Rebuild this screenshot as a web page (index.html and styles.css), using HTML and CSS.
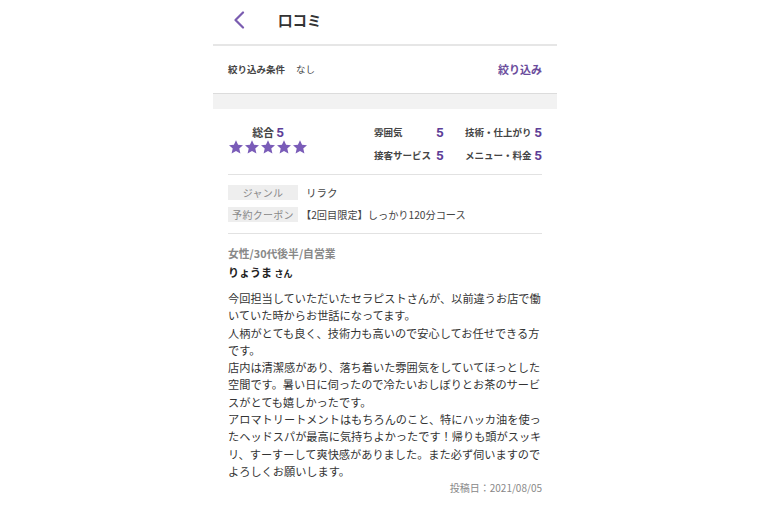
FILE: index.html
```html
<!DOCTYPE html>
<html lang="ja">
<head>
<meta charset="utf-8">
<link rel="stylesheet" href="styles.css">
</head>
<body>
<div class="page">
  <header class="header">
    <svg class="back" width="12" height="18" viewBox="0 0 12 18"><polyline points="10,1.5 2.5,9 10,16.5" fill="none" stroke="#7a5cb0" stroke-width="2.2" stroke-linecap="round" stroke-linejoin="round"/></svg>
    <h1 class="title">口コミ</h1>
  </header>
  <div class="filter">
    <div class="filter-left"><span class="filter-label">絞り込み条件</span><span class="filter-value">なし</span></div>
    <div class="filter-btn">絞り込み</div>
  </div>
  <div class="band"></div>
  <section class="ratings">
    <div class="total">
      <div class="total-line"><span class="total-label">総合</span><span class="num">5</span></div>
      <div class="stars">
        <svg viewBox="0 0 24 24" class="star"><path d="M12 1.8l3.1 6.9 7.4.7-5.6 5 1.7 7.4L12 17.9l-6.6 3.9 1.7-7.4-5.6-5 7.4-.7z"/></svg>
        <svg viewBox="0 0 24 24" class="star"><path d="M12 1.8l3.1 6.9 7.4.7-5.6 5 1.7 7.4L12 17.9l-6.6 3.9 1.7-7.4-5.6-5 7.4-.7z"/></svg>
        <svg viewBox="0 0 24 24" class="star"><path d="M12 1.8l3.1 6.9 7.4.7-5.6 5 1.7 7.4L12 17.9l-6.6 3.9 1.7-7.4-5.6-5 7.4-.7z"/></svg>
        <svg viewBox="0 0 24 24" class="star"><path d="M12 1.8l3.1 6.9 7.4.7-5.6 5 1.7 7.4L12 17.9l-6.6 3.9 1.7-7.4-5.6-5 7.4-.7z"/></svg>
        <svg viewBox="0 0 24 24" class="star"><path d="M12 1.8l3.1 6.9 7.4.7-5.6 5 1.7 7.4L12 17.9l-6.6 3.9 1.7-7.4-5.6-5 7.4-.7z"/></svg>
      </div>
    </div>
    <div class="detail">
      <span class="d-label">雰囲気</span><span class="num">5</span>
      <span class="d-label">技術・仕上がり</span><span class="num end">5</span>
      <span class="d-label">接客サービス</span><span class="num">5</span>
      <span class="d-label">メニュー・料金</span><span class="num end">5</span>
    </div>
  </section>
  <section class="info">
    <div class="info-row"><span class="tag">ジャンル</span><span class="info-val">リラク</span></div>
    <div class="info-row"><span class="tag">予約クーポン</span><span class="info-val coupon">【2回目限定】しっかり120分コース</span></div>
  </section>
  <section class="review">
    <div class="attr">女性/30代後半/自営業</div>
    <div class="name">りょうま <span class="san">さん</span></div>
    <p class="body">今回担当していただいたセラピストさんが、以前違うお店で働いていた時からお世話になってます。<br>人柄がとても良く、技術力も高いので安心してお任せできる方です。<br>店内は清潔感があり、落ち着いた雰囲気をしていてほっとした空間です。暑い日に伺ったので冷たいおしぼりとお茶のサービスがとても嬉しかったです。<br>アロマトリートメントはもちろんのこと、特にハッカ油を使ったヘッドスパが最高に気持ちよかったです！帰りも頭がスッキリ、すーすーして爽快感がありました。また必ず伺いますのでよろしくお願いします。</p>
    <div class="date">投稿日：2021/08/05</div>
  </section>
</div>
</body>
</html>
```
FILE: styles.css
```css
html, body {
  margin: 0;
  padding: 0;
  background: #fff;
}
body {
  font-family: "Noto Sans CJK JP", "Noto Sans", sans-serif;
  color: #333;
}
.page {
  width: 344px;
  margin: 0 auto;
}
.header {
  box-sizing: border-box;
  height: 46px;
  padding: 0 0 4px 20px;
  display: flex;
  align-items: center;
  border-bottom: 2px solid #e6e6e6;
}
.back {
  display: block;
}
.title {
  margin: 0 0 0 33px;
  font-size: 14.5px;
  font-weight: 700;
  color: #333;
  line-height: 20px;
}
.filter {
  box-sizing: border-box;
  height: 47px;
  padding: 0 15px 2px;
  display: flex;
  align-items: center;
  justify-content: space-between;
}
.filter-left {
  font-size: 9.5px;
  line-height: 14px;
  display: flex;
  align-items: center;
}
.filter-label {
  font-weight: 700;
  color: #444;
}
.filter-value {
  color: #444;
  margin-left: 11px;
}
.filter-btn {
  font-size: 11px;
  line-height: 14px;
  font-weight: 700;
  color: #6a4c9c;
}
.band {
  height: 15px;
  background: #f2f2f2;
  border-top: 1px solid #dcdcdc;
}
.ratings {
  margin: 0 15px;
  padding: 13px 0 9px;
  display: flex;
  border-bottom: 1px solid #e2e2e2;
}
.total {
  width: 80px;
  display: flex;
  flex-direction: column;
  align-items: center;
}
.total-line {
  height: 20px;
  display: flex;
  align-items: center;
}
.total-label {
  font-size: 11px;
  font-weight: 700;
  color: #444;
  margin-right: 2px;
}
.num {
  font-family: "Roboto", "Noto Sans", sans-serif;
  font-size: 13.5px;
  font-weight: 700;
  color: #5e3f98;
  line-height: 20px;
}
.stars {
  display: flex;
  margin-top: -3px;
}
.star {
  width: 16px;
  height: 16px;
  fill: #7a5cb8;
}
.detail {
  margin-left: 66px;
  display: grid;
  grid-template-columns: 62px 29px 70px 7px;
  grid-auto-rows: 20px;
  row-gap: 3px;
  align-items: center;
}
.d-label {
  font-size: 9.5px;
  font-weight: 700;
  color: #444;
  white-space: nowrap;
}
.end {
  justify-self: end;
}
.info {
  margin: 0 15px;
  padding: 10px 0 11px;
  display: flex;
  flex-direction: column;
  gap: 7px;
  border-bottom: 1px solid #e2e2e2;
}
.info-row {
  display: flex;
  align-items: center;
  height: 15px;
}
.tag {
  width: 70px;
  height: 15px;
  line-height: 15px;
  background: #eeeeee;
  color: #888;
  font-size: 10px;
  text-align: center;
  letter-spacing: 0.3px;
}
.info-val {
  margin-left: 8px;
  font-size: 10.5px;
  color: #444;
}
.coupon {
  margin-left: 3px;
  font-size: 10.2px;
}
.review {
  margin: 0 15px;
  padding-top: 10px;
}
.attr {
  font-size: 10.8px;
  font-weight: 700;
  color: #888;
  line-height: 18px;
}
.name {
  margin-top: 1px;
  font-size: 11px;
  font-weight: 700;
  color: #222;
  line-height: 18px;
}
.san {
  font-size: 9px;
}
.body {
  margin: 7px 0 0;
  font-size: 11.2px;
  line-height: 17.3px;
  color: #333;
}
.date {
  text-align: right;
  font-size: 10px;
  color: #888;
  line-height: 15px;
}
```
